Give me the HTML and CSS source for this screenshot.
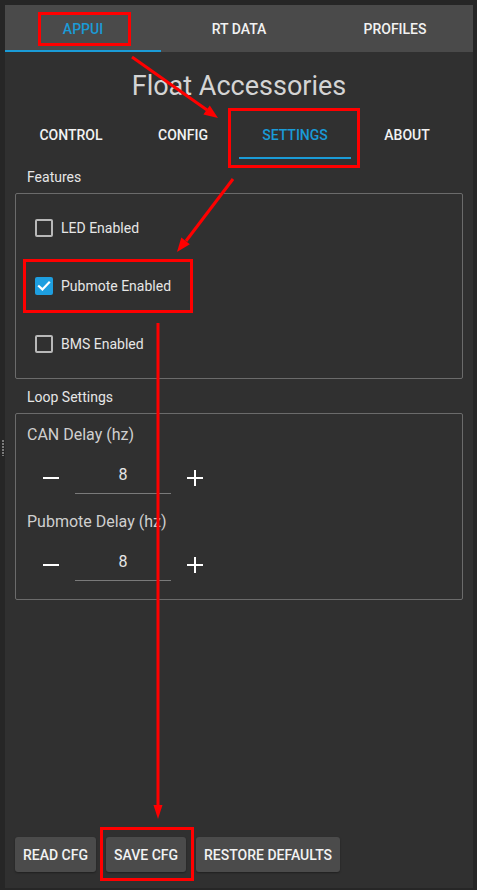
FILE: index.html
```html
<!DOCTYPE html>
<html>
<head>
<meta charset="utf-8">
<link rel="stylesheet" href="styles.css">
</head>
<body>
<div class="gutter"><div class="grip"></div></div>
<div class="app">
  <nav class="top-tabs">
    <div class="tab active">APPUI</div>
    <div class="tab">RT DATA</div>
    <div class="tab">PROFILES</div>
  </nav>
  <h1 class="title">Float Accessories</h1>
  <div class="content">
    <nav class="sub-tabs">
      <div class="sub-tab">CONTROL</div>
      <div class="sub-tab">CONFIG</div>
      <div class="sub-tab active">SETTINGS</div>
      <div class="sub-tab">ABOUT</div>
    </nav>

    <div class="group-label">Features</div>
    <div class="group features">
      <div class="check-row"><span class="checkbox"></span><span>LED Enabled</span></div>
      <div class="check-row"><span class="checkbox checked"><svg viewBox="0 0 18 18" width="18" height="18"><path d="M4 9.2 L7.4 12.4 L14 5.6" fill="none" stroke="#fff" stroke-width="2.2" stroke-linecap="square"/></svg></span><span>Pubmote Enabled</span></div>
      <div class="check-row"><span class="checkbox"></span><span>BMS Enabled</span></div>
    </div>

    <div class="group-label">Loop Settings</div>
    <div class="group loop">
      <div class="field">
        <div class="field-label">CAN Delay (hz)</div>
        <div class="stepper">
          <span class="minus"></span>
          <span class="value">8</span>
          <span class="plus"></span>
        </div>
      </div>
      <div class="field">
        <div class="field-label">Pubmote Delay (hz)</div>
        <div class="stepper">
          <span class="minus"></span>
          <span class="value">8</span>
          <span class="plus"></span>
        </div>
      </div>
    </div>

    <div class="spacer"></div>

    <div class="buttons">
      <button class="btn">READ CFG</button>
      <button class="btn">SAVE CFG</button>
      <button class="btn">RESTORE DEFAULTS</button>
    </div>
  </div>
</div>

<svg class="annotations" width="477" height="890" viewBox="0 0 477 890">
  <g fill="none" stroke="#ff0000" stroke-width="3">
    <rect x="39.5" y="13.5" width="90" height="31"/>
    <rect x="229.5" y="109.5" width="129" height="57"/>
    <rect x="24.5" y="260.5" width="167" height="51"/>
    <rect x="101.5" y="828.5" width="91" height="51"/>
    <line x1="132" y1="57" x2="207" y2="110"/>
    <line x1="233" y1="179" x2="186" y2="241"/>
    <line x1="158" y1="323" x2="158" y2="806"/>
  </g>
  <g fill="#ff0000">
    <polygon points="218,118 203.4,114.4 209.8,105.4"/>
    <polygon points="177,252 181.3,237.6 189.8,244.2"/>
    <polygon points="153.5,805 162.5,805 158,819"/>
  </g>
</svg>
</body>
</html>
```

FILE: styles.css
```css
* { box-sizing: border-box; }

html, body {
  margin: 0;
  padding: 0;
}

body {
  width: 477px;
  height: 890px;
  background: #262626;
  font-family: Roboto, "Liberation Sans", sans-serif;
  color: #e8e8e8;
  display: flex;
  position: relative;
  overflow: hidden;
}

.gutter {
  width: 5px;
  display: flex;
  align-items: center;
  justify-content: center;
  padding-top: 6px;
}

.grip {
  width: 2px;
  height: 16px;
  background: repeating-linear-gradient(to bottom, #7a7a7a 0 2px, transparent 2px 3px);
}

.app {
  width: 468px;
  height: 883px;
  margin-top: 5px;
  background: #303030;
  display: flex;
  flex-direction: column;
}

.top-tabs {
  height: 47px;
  background: #4a4a4a;
  display: grid;
  grid-template-columns: 156px 156px 156px;
}

.tab {
  display: flex;
  align-items: center;
  justify-content: center;
  font-size: 14px;
  font-weight: 500;
  color: #f2f2f2;
}

.tab.active {
  color: #1a9bd7;
  box-shadow: inset 0 -2px 0 #1a9bd7;
}

.title {
  margin: 18px 0 0;
  height: 32px;
  font-size: 27px;
  line-height: 32px;
  font-weight: 400;
  text-align: center;
  color: #d4d4d4;
}

.content {
  flex: 1;
  display: flex;
  flex-direction: column;
  padding: 0 10px;
}

.sub-tabs {
  margin-top: 9px;
  display: grid;
  grid-template-columns: repeat(4, 112px);
  height: 48px;
}

.sub-tab {
  display: flex;
  align-items: center;
  justify-content: center;
  font-size: 14px;
  font-weight: 500;
  color: #f2f2f2;
}

.sub-tab.active {
  color: #1a9bd7;
  box-shadow: inset 0 -2px 0 #1a9bd7;
}

.group-label {
  margin-top: 10px;
  margin-bottom: 7px;
  padding-left: 12px;
  font-size: 14px;
  line-height: 17px;
  color: #e6e6e6;
}

.group {
  border: 1px solid #6b6b6b;
  border-radius: 2px;
}

.features {
  padding: 5px 0 5px 19px;
}

.check-row {
  height: 58px;
  display: flex;
  align-items: center;
  gap: 8px;
  font-size: 14px;
  color: #e6e6e6;
}

.checkbox {
  width: 18px;
  height: 18px;
  border: 2px solid #b8b8b8;
  border-radius: 2px;
  display: block;
}

.checkbox.checked {
  border: none;
  background: #1e9fe0;
}

.checkbox svg { display: block; }

.loop {
  padding: 11px 11px 18px;
  display: flex;
  flex-direction: column;
  gap: 18px;
}

.field-label {
  font-size: 16px;
  line-height: 20px;
  color: #cfcfcf;
}

.stepper {
  margin-top: 8px;
  height: 41px;
  display: flex;
  align-items: center;
  gap: 16px;
  padding-left: 16px;
}

.minus {
  width: 16px;
  height: 2px;
  background: #ffffff;
  margin-top: 8px;
}

.plus {
  width: 16px;
  height: 16px;
  margin-top: 8px;
  background:
    linear-gradient(#ffffff, #ffffff) center / 16px 2px no-repeat,
    linear-gradient(#ffffff, #ffffff) center / 2px 16px no-repeat;
}

.value {
  width: 96px;
  height: 41px;
  padding-top: 2px;
  border-bottom: 1px solid #7a7a7a;
  display: flex;
  align-items: center;
  justify-content: center;
  font-size: 16px;
  color: #e6e6e6;
}

.spacer { flex: 1; }

.buttons {
  display: flex;
  gap: 10px;
  margin-bottom: 16px;
}

.btn {
  height: 35px;
  padding: 0 8px;
  border: none;
  border-radius: 3px;
  background: #4b4b4b;
  color: #f2f2f2;
  font-family: Roboto, "Liberation Sans", sans-serif;
  font-size: 14px;
  font-weight: 500;
  box-shadow: 0 1px 2px rgba(0, 0, 0, 0.35);
}

.annotations {
  position: absolute;
  left: 0;
  top: 0;
  pointer-events: none;
}
```
